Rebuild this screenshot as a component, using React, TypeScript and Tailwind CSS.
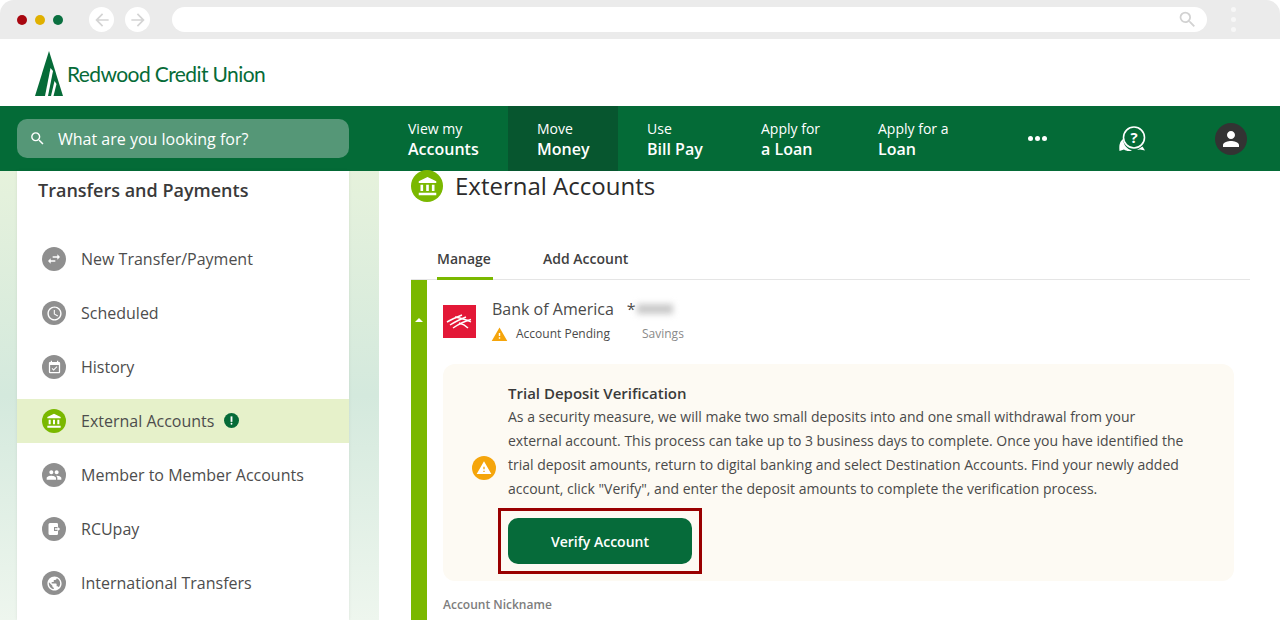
import React from "react";
import { MdAccountBalance, MdSwapHoriz, MdAccessTime, MdEventAvailable, MdPeople, MdPublic, MdPerson, MdSearch, MdWarning, MdPriorityHigh, MdArrowBack, MdArrowForward } from "react-icons/md";

const font = { fontFamily: '"Open Sans", sans-serif' };

function Logo() {
  return (
    <div className="flex items-end">
      <svg width="28" height="45" viewBox="0 0 28 45" className="block">
        <path d="M14 0 L28 45 H0 Z" fill="#066b38" />
        <path d="M15.5 17 L10 45 H13 L18 20 Z" fill="#fff" />
        <path d="M19.5 30 L16 45 H18.5 L21.5 33 Z" fill="#fff" />
      </svg>
      <span className="ml-[4px] mb-[9px] text-[21px] leading-[26px] tracking-[-0.6px] text-[#066b38]" style={{ fontFamily: "Lato, sans-serif" }}>Redwood Credit Union</span>
    </div>
  );
}

function NavItem({ top, bottom, w, active }: { top: string; bottom: string; w: string; active?: boolean }) {
  return (
    <div className={`${w} ${active ? "bg-[#07562f]" : ""} h-full pl-[29px] flex flex-col justify-center text-white shrink-0`}>
      <div className="text-[14px] leading-[20px] mt-[1px]">{top}</div>
      <div className="text-[16px] leading-[20px] font-semibold">{bottom}</div>
    </div>
  );
}

function ChatIcon() {
  return (
    <svg width="28" height="28" viewBox="0 0 28 28" fill="none">
      <path d="M5 14 C1.5 17 1 20 1.5 26 L6 24.5 C8 26 11 26.5 14 25.5 C9 24 5.5 20 5 14 Z" fill="#fff" />
      <path d="M19 25 L22 24.5 L27 25.5 L24.5 21.5 Z" fill="#fff" />
      <circle cx="16" cy="12.5" r="10.5" stroke="#fff" strokeWidth="1.6" />
      <text x="16" y="18" textAnchor="middle" fontSize="15" fontWeight="700" fill="#fff" fontFamily="Open Sans, sans-serif">?</text>
    </svg>
  );
}

function Circle({ active, children }: { active?: boolean; children: React.ReactNode }) {
  return (
    <div className={`w-[24px] h-[24px] rounded-full flex items-center justify-center text-white shrink-0 ${active ? "bg-[#7ab800]" : "bg-[#8f8f8f]"}`}>
      {children}
    </div>
  );
}

function RcuIcon() {
  return (
    <svg width="14" height="14" viewBox="0 0 14 14">
      <path d="M3 1 H10 A1.5 1.5 0 0 1 11 3 V5 H7 V9 H11 V11 A1.5 1.5 0 0 1 10 13 H3 A1.5 1.5 0 0 1 1.5 11.5 V2.5 A1.5 1.5 0 0 1 3 1 Z" fill="#fff" />
      <path d="M8 6.2 H10.5 V4.8 L13.2 7 L10.5 9.2 V7.8 H8 Z" fill="#fff" />
    </svg>
  );
}

function SideItem({ icon, label, active, badge }: { icon: React.ReactNode; label: string; active?: boolean; badge?: boolean }) {
  return (
    <div className={`h-[44px] flex items-center pl-[25px] mb-[10px] ${active ? "bg-[#e6f1ca]" : ""}`}>
      <Circle active={active}>{icon}</Circle>
      <span className="ml-[15px] text-[16px] text-[#4d4d4d] leading-[22px]">{label}</span>
      {badge && (
        <span className="ml-[10px] w-[15px] h-[15px] rounded-full bg-[#066b38] text-white flex items-center justify-center mb-[1px]">
          <MdPriorityHigh size={11} />
        </span>
      )}
    </div>
  );
}

function BofA() {
  return (
    <div className="w-[33px] h-[33px] bg-[#e31837] flex items-center justify-center">
      <svg width="27" height="16" viewBox="0 0 27 16" fill="none" stroke="#fff" strokeLinecap="butt">
        <path d="M1 8 C6 5 11 3 16 1" strokeWidth="1.5" />
        <path d="M4 11 C10 7 15 5 20 3" strokeWidth="1.5" />
        <path d="M7 14 C13 10 18 7 25 5.5" strokeWidth="1.5" />
        <path d="M9 3 C14 4 19 5 25 8" strokeWidth="1.3" />
        <path d="M13 9 C17 10 20 12 22 14" strokeWidth="1.5" />
      </svg>
    </div>
  );
}

export default function App() {
  return (
    <div className="w-[1280px] h-[620px] overflow-hidden bg-white flex flex-col" style={font}>
      {/* browser chrome */}
      <div className="h-[39px] shrink-0 bg-[#ebebeb] flex items-center rounded-t-[14px]">
        <div className="flex ml-[17px] gap-[8px]">
          <span className="w-[10px] h-[10px] rounded-full bg-[#a80710]" />
          <span className="w-[10px] h-[10px] rounded-full bg-[#e0b000]" />
          <span className="w-[10px] h-[10px] rounded-full bg-[#0a7040]" />
        </div>
        <div className="ml-[26px] flex gap-[11px]">
          <span className="w-[25px] h-[25px] rounded-full bg-white flex items-center justify-center text-[#d4d4d4]"><MdArrowBack size={20} /></span>
          <span className="w-[25px] h-[25px] rounded-full bg-white flex items-center justify-center text-[#d4d4d4]"><MdArrowForward size={20} /></span>
        </div>
        <div className="ml-[22px] w-[1035px] h-[25px] rounded-full bg-white flex items-center justify-end pr-[9px] text-[#d2d2d2]">
          <MdSearch size={21} />
        </div>
        <div className="ml-[24px] flex flex-col gap-[5px]">
          <span className="w-[5px] h-[5px] rounded-full bg-[#f7f7f7]" />
          <span className="w-[5px] h-[5px] rounded-full bg-[#f7f7f7]" />
          <span className="w-[5px] h-[5px] rounded-full bg-[#f7f7f7]" />
        </div>
      </div>
      {/* logo row */}
      <div className="h-[67px] shrink-0 flex items-start pl-[35px] pt-[12px]">
        <Logo />
      </div>
      {/* nav */}
      <div className="h-[65px] shrink-0 bg-[#046b37] flex items-center">
        <div className="ml-[17px] w-[332px] h-[39px] rounded-[10px] bg-[#559777] flex items-center pl-[12px] text-white shrink-0">
          <MdSearch size={17} />
          <span className="ml-[12px] text-[16px]">What are you looking for?</span>
        </div>
        <div className="ml-[30px] h-full flex">
          <NavItem w="w-[129px]" top="View my" bottom="Accounts" />
          <NavItem w="w-[110px]" top="Move" bottom="Money" active />
          <NavItem w="w-[114px]" top="Use" bottom="Bill Pay" />
          <NavItem w="w-[117px]" top="Apply for" bottom="a Loan" />
          <NavItem w="w-[150px]" top="Apply for a" bottom="Loan" />
        </div>
        <div className="flex gap-[2px] ml-[29px]">
          <span className="w-[5px] h-[5px] rounded-full bg-white" />
          <span className="w-[5px] h-[5px] rounded-full bg-white" />
          <span className="w-[5px] h-[5px] rounded-full bg-white" />
        </div>
        <div className="ml-[71px]"><ChatIcon /></div>
        <div className="ml-[69px] w-[32px] h-[32px] rounded-full bg-[#333333] flex items-center justify-center text-white"><MdPerson size={24} /></div>
      </div>
      {/* body */}
      <div className="flex flex-1 min-h-0">
        <div className="w-[379px] shrink-0 flex bg-gradient-to-b from-[#e6f2dc] via-[#d4e9dd] to-[#eef6ee]">
          <div className="w-[17px]" />
          <div className="w-[332px] bg-white pt-[7px] shadow-[0_0_3px_rgba(0,0,0,0.08)]">
            <div className="pl-[21px] text-[18px] leading-[24px] font-semibold text-[#3a3a3a] mb-[35px]">Transfers and Payments</div>
            <SideItem icon={<MdSwapHoriz size={16} />} label="New Transfer/Payment" />
            <SideItem icon={<MdAccessTime size={17} />} label="Scheduled" />
            <SideItem icon={<MdEventAvailable size={15} />} label="History" />
            <SideItem icon={<MdAccountBalance size={16} />} label="External Accounts" active badge />
            <SideItem icon={<MdPeople size={16} />} label="Member to Member Accounts" />
            <SideItem icon={<RcuIcon />} label="RCUpay" />
            <SideItem icon={<MdPublic size={17} />} label="International Transfers" />
            <SideItem icon={<span />} label="" />
          </div>
        </div>
        <div className="ml-[32px] w-[839px] min-w-0">
          <div className="flex items-center h-[30px]">
            <span className="w-[32px] h-[32px] rounded-full bg-[#7ab800] flex items-center justify-center text-white"><MdAccountBalance size={21} /></span>
            <span className="ml-[12px] text-[24px] leading-[30px] font-medium text-[#2b2b2b]">External Accounts</span>
          </div>
          <div className="mt-[48px] h-[31px] flex border-b border-[#e5e5e5] pl-[26px] text-[14px] font-semibold text-[#3f3f3f]">
            <div className="w-[56px] h-[31px] border-b-[3px] border-[#7ab800] leading-[20px]">Manage</div>
            <div className="ml-[50px] leading-[20px]">Add Account</div>
          </div>
          <div className="flex">
            <div className="w-[16px] h-[340px] bg-[#7ab800] shrink-0 flex justify-center pt-[38px]">
              <span className="w-0 h-0 border-x-[4px] border-x-transparent border-b-[4px] border-b-white" />
            </div>
            <div className="ml-[16px] flex-1 pr-[16px]">
              <div className="flex pt-[18px]">
                <div className="mt-[7px]"><BofA /></div>
                <div className="ml-[16px]">
                  <div className="flex items-center h-[22px] text-[16px] text-[#4a4a4a]">
                    Bank of America
                    <span className="ml-[13px]">*</span>
                    <span className="ml-[1px] w-[36px] h-[10px] bg-[#c9c9c9] blur-[3px]" />
                  </div>
                  <div className="flex items-center mt-[5px] text-[12px] leading-[18px]">
                    <MdWarning size={17} className="text-[#f5a50b] ml-[-1px]" />
                    <span className="ml-[8px] text-[#4a4a4a]">Account Pending</span>
                    <span className="ml-[32px] text-[#8a8a8a]">Savings</span>
                  </div>
                </div>
              </div>
              <div className="mt-[21px] h-[217px] w-[791px] rounded-[12px] bg-[#fdfaf3] flex">
                <div className="w-[65px] shrink-0 flex items-center justify-center pb-[10px] pl-[17px]">
                  <span className="w-[24px] h-[24px] rounded-full bg-[#f5a50b] flex items-center justify-center text-white"><MdWarning size={16} /></span>
                </div>
                <div className="pt-[18px] w-[710px]">
                  <div className="text-[15px] leading-[22px] font-semibold text-[#3a3a3a]">Trial Deposit Verification</div>
                  <p className="text-[14px] leading-[24px] text-[#4a4a4a] mt-[1px]">
                    As a security measure, we will make two small deposits into and one small withdrawal from your<br />
                    external account. This process can take up to 3 business days to complete. Once you have identified the<br />
                    trial deposit amounts, return to digital banking and select Destination Accounts. Find your newly added<br />
                    account, click "Verify", and enter the deposit amounts to complete the verification process.
                  </p>
                  <div className="mt-[7px] ml-[-10px] w-[204px] h-[66px] border-[3px] border-[#990000] p-[7px]">
                    <div className="w-full h-full rounded-[10px] bg-[#066b3a] text-white text-[14px] font-semibold flex items-center justify-center">Verify Account</div>
                  </div>
                </div>
              </div>
              <div className="mt-[16px] text-[12px] leading-[16px] font-semibold text-[#7d7d7d]">Account Nickname</div>
            </div>
          </div>
        </div>
      </div>
    </div>
  );
}
